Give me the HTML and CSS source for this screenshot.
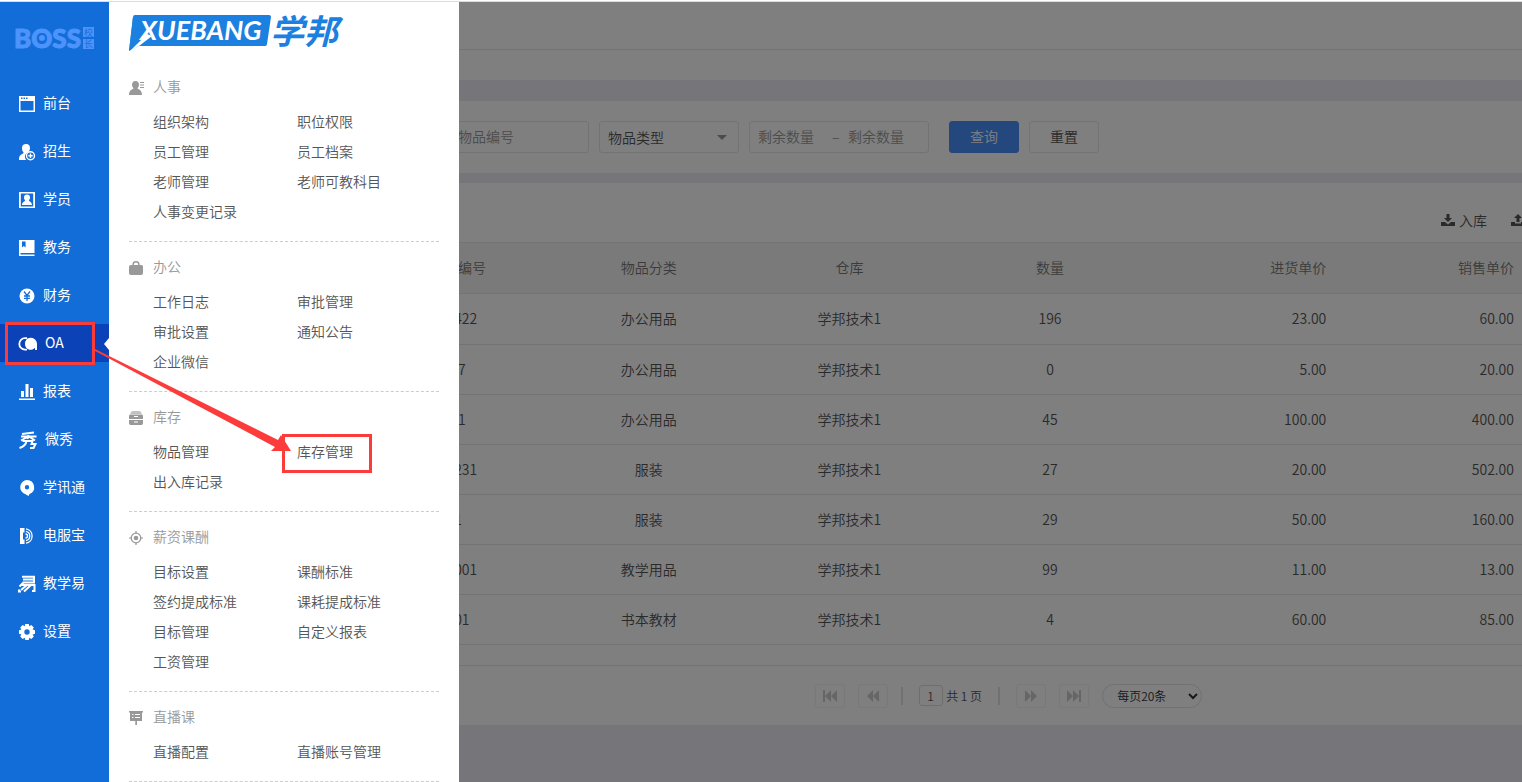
FILE: index.html
```html
<!DOCTYPE html>
<html lang="zh-CN">
<head>
    <meta charset="UTF-8">
    <meta name="viewport" content="width=device-width, initial-scale=1.0">
    <title>库存管理</title>
    <link rel="stylesheet" href="styles.css">
</head>
<body>
    <div class="app">
        <nav class="sidebar">
            <div class="boss">
                <svg width="84" height="34" viewBox="0 0 84 34">
                    <text class="boss-word" x="0" y="27">BOSS</text>
                    <circle cx="28" cy="17" r="3" fill="#4c93fb"/>
                    <rect x="69" y="6" width="11" height="10" fill="#4c93fb"/>
                    <rect x="69" y="18" width="11" height="10" fill="#4c93fb"/>
                    <text class="boss-small" x="70" y="15">校</text>
                    <text class="boss-small" x="70" y="26">长</text>
                </svg>
            </div>
            <a class="nav-item" href="#">
                <svg class="nav-icon" viewBox="0 0 18 18"><path fill-rule="evenodd" d="M1 1h16v16H1zM2.500 6v9.500h13V6zM3 2.500v1.500h1.500V2.500zM5.500 2.500v1.500H7V2.500zM8 2.500v1.500h1.500V2.500z"/></svg>
                <span>前台</span>
            </a>
            <a class="nav-item" href="#">
                <svg class="nav-icon" viewBox="0 0 18 18"><path d="M8 1c3 0 4.200 2 4 4.500-.2 1.500-1 2.500-1.500 3.500C8 10 6.500 12 7 14.500c.2 1 .6 1.800 1.200 2.500H1c0-4 .8-5 4.800-7C4.500 8.500 4 7 4 5c0-2.500 1.500-4 4-4z"/><circle cx="12.500" cy="12.700" r="4" fill="none" stroke="#fff" stroke-width="1.400"/><path d="M11.800 10.500h1.400v1.500h1.500v1.400h-1.500V15h-1.400v-1.600h-1.500V12h1.500z"/></svg>
                <span>招生</span>
            </a>
            <a class="nav-item" href="#">
                <svg class="nav-icon" viewBox="0 0 18 18"><path fill-rule="evenodd" d="M1 1h16v16H1zM2.800 2.500v13h12.400v-13z"/><path d="M9 3.500c2 0 3 1.300 3 3 0 1.400-.6 2-1.200 2.900.3 1 3.200 1.300 3.200 4.600H4c0-3.300 2.900-3.600 3.200-4.600C6.600 8.500 6 7.900 6 6.500c0-1.700 1-3 3-3z"/></svg>
                <span>学员</span>
            </a>
            <a class="nav-item" href="#">
                <svg class="nav-icon" viewBox="0 0 18 18"><path fill-rule="evenodd" d="M1 1h15.500v16H1zM4 2.500v6l1.800-1.400L7.600 8.500v-6zM2.500 14v1.500h14V14z"/></svg>
                <span>教务</span>
            </a>
            <a class="nav-item" href="#">
                <svg class="nav-icon" viewBox="0 0 18 18"><circle cx="9" cy="9" r="7.500"/><path class="cut" d="M6 4.500l3 4 3-4M9 8.500V14M6 9h6M6 11.300h6"/></svg>
                <span>财务</span>
            </a>
            <a class="nav-item active" href="#">
                <svg class="nav-icon wide" viewBox="0 0 20 18"><path d="M9 3.200H7a5.700 5.700 0 0 0 0 11.400h2" fill="none" stroke="#fff" stroke-width="1.800"/><path d="M13 2.800a6 6 0 0 1 6 6.200v6h-2v-2.200a6 6 0 1 1-4-10z"/><path d="M8 4.500c-2 2-2 7 .3 9" fill="none" stroke="#0b42b8" stroke-width="1"/></svg>
                <span>OA</span>
            </a>
            <a class="nav-item" href="#">
                <svg class="nav-icon" viewBox="0 0 18 18"><path d="M3 8h3v6H3zM7.500 1h3v13h-3zM12 5h3v9h-3zM1 15.500h16V17H1z"/></svg>
                <span>报表</span>
            </a>
            <a class="nav-item" href="#">
                <svg class="nav-icon wide" viewBox="0 0 20 18"><path class="line" d="M4 3l12-1.500M3 5.500h15.500M11 2L9.500 8M10 5.500L3 9.500M11 5.500l6 4M4.500 10h10l-1 3h4l-2 4H12M8.500 10c-.5 3-2.500 5.500-7 7"/></svg>
                <span>微秀</span>
            </a>
            <a class="nav-item" href="#">
                <svg class="nav-icon" viewBox="0 0 18 18"><path fill-rule="evenodd" d="M9 1a7.300 7.300 0 0 1 2.500 14.100L10.500 17 7.500 15.300A7.300 7.300 0 0 1 9 1zm0 5a2.200 2.200 0 1 0 0 4.400A2.200 2.200 0 0 0 9 6z"/></svg>
                <span>学讯通</span>
            </a>
            <a class="nav-item" href="#">
                <svg class="nav-icon" viewBox="0 0 18 18"><path d="M2 1h4.500v4.500H5v7h1.500V17H2z"/><path d="M8 1.800a7.300 7.300 0 0 1 0 14.400M8 4.400a4.700 4.700 0 0 1 0 9.200M7.500 7a2 2 0 0 1 0 4" fill="none" stroke="#fff" stroke-width="1.300"/></svg>
                <span>电服宝</span>
            </a>
            <a class="nav-item" href="#">
                <svg class="nav-icon" viewBox="0 0 18 18"><path class="line" d="M4 1.800h12v5.700H4.500M5 4.600h11M5.500 7.500L1.500 11.500M4 10h12.500v6H14M9 10l-6 5M13 10l-7 6.500M1 14.500v2h2"/></svg>
                <span>教学易</span>
            </a>
            <a class="nav-item" href="#">
                <svg class="nav-icon" viewBox="0 0 18 18"><path fill-rule="evenodd" d="M7.200 1h3.600l.5 2.300 2-1.200 2.500 2.500-1.200 2 2.400.6v3.600l-2.400.6 1.200 2-2.500 2.500-2-1.200-.5 2.300H7.200l-.5-2.300-2 1.200-2.500-2.500 1.200-2L1 10.800V7.200l2.400-.6-1.200-2 2.500-2.500 2 1.200zM9 6.300a2.700 2.700 0 1 0 0 5.400 2.700 2.700 0 0 0 0-5.400z"/></svg>
                <span>设置</span>
            </a>
        </nav>

        <main class="main">
            <div class="topbar"></div>
            <div class="tabs"></div>

            <form class="filters">
                <input class="field" type="text" placeholder="物品编号" aria-label="物品编号">
                <div class="select-box">
                    <select class="field" aria-label="物品类型">
                        <option>物品类型</option>
                    </select>
                </div>
                <div class="range">
                    <input type="text" placeholder="剩余数量" aria-label="最小剩余数量">
                    <span>–</span>
                    <input type="text" placeholder="剩余数量" aria-label="最大剩余数量">
                </div>
                <button class="btn primary" type="button">查询</button>
                <button class="btn" type="reset">重置</button>
            </form>

            <section class="stock">
                <div class="toolbar">
                    <a href="#">
                        <svg width="14" height="14" viewBox="0 0 14 14"><path d="M5.500 1h3v4H11L7 9 3 5h2.500zM0 9h4l3 2.500L10 9h4v4H0z"/></svg>
                        <span>入库</span>
                    </a>
                    <a class="stock-out" href="#" aria-label="出库">
                        <svg width="14" height="14" viewBox="0 0 14 14"><path d="M5.500 9h3V5H11L7 1 3 5h2.500zM0 9h4v1.500h6V9h4v4H0z"/></svg>
                    </a>
                </div>
                <table>
                    <colgroup>
                        <col class="col-name">
                        <col class="col-code">
                        <col class="col-mid">
                        <col class="col-mid">
                        <col class="col-mid">
                        <col class="col-price">
                        <col>
                    </colgroup>
                    <thead>
                        <tr><th></th><th>物品编号</th><th>物品分类</th><th>仓库</th><th>数量</th><th class="num">进货单价</th><th class="num">销售单价</th></tr>
                    </thead>
                    <tbody>
                        <tr><td></td><td>20422</td><td>办公用品</td><td>学邦技术1</td><td>196</td><td class="num">23.00</td><td class="num">60.00</td></tr>
                        <tr><td></td><td>07</td><td>办公用品</td><td>学邦技术1</td><td>0</td><td class="num">5.00</td><td class="num">20.00</td></tr>
                        <tr><td></td><td>01</td><td>办公用品</td><td>学邦技术1</td><td>45</td><td class="num">100.00</td><td class="num">400.00</td></tr>
                        <tr><td></td><td>20231</td><td>服装</td><td>学邦技术1</td><td>27</td><td class="num">20.00</td><td class="num">502.00</td></tr>
                        <tr><td></td><td>1</td><td>服装</td><td>学邦技术1</td><td>29</td><td class="num">50.00</td><td class="num">160.00</td></tr>
                        <tr><td></td><td>20001</td><td>教学用品</td><td>学邦技术1</td><td>99</td><td class="num">11.00</td><td class="num">13.00</td></tr>
                        <tr><td></td><td>001</td><td>书本教材</td><td>学邦技术1</td><td>4</td><td class="num">60.00</td><td class="num">85.00</td></tr>
                    </tbody>
                </table>
                <div class="pager">
                    <button type="button" aria-label="首页"><svg width="16" height="14" viewBox="0 0 16 14"><path d="M1 1h2v12H1zM9 1v12L3 7zM15 1v12L9 7z"/></svg></button>
                    <button type="button" aria-label="上一页"><svg width="16" height="14" viewBox="0 0 16 14"><path d="M8 1v12L2 7zM14 1v12L8 7z"/></svg></button>
                    <i class="sep"></i>
                    <label><input type="text" value="1"> 共 1 页</label>
                    <i class="sep"></i>
                    <button type="button" aria-label="下一页"><svg width="16" height="14" viewBox="0 0 16 14"><path d="M2 1v12l6-6zM8 1v12l6-6z"/></svg></button>
                    <button type="button" aria-label="末页"><svg width="16" height="14" viewBox="0 0 16 14"><path d="M1 1v12l6-6zM7 1v12l6-6zM13 1h2v12h-2z"/></svg></button>
                    <select aria-label="每页条数">
                        <option>每页20条</option>
                    </select>
                </div>
            </section>
            <div class="mask"></div>
        </main>

        <!-- OA 二级菜单 -->
        <aside class="menu">
            <div class="logo">
                <svg width="220" height="50" viewBox="0 0 220 50">
                    <path fill="#1b80e0" d="M6 8h134q2 0 2 2l-4 27q0 2-2 2H10L0 44 4 10q0-2 2-2z"/>
                    <path fill="#fff" d="M18 27l5 2-13 10-9 5z"/>
                    <path fill="#1b80e0" d="M4 10l15 16L0 44z"/>
                    <text class="logo-en" x="11" y="33">XUEBANG</text>
                    <text class="logo-cn" x="141" y="37">学邦</text>
                </svg>
            </div>

            <section class="group">
                <h2>
                    <svg viewBox="0 0 16 16"><path d="M6.500 1C9 1 10 2.700 10 5c0 1.500-.8 2.400-1.500 3.300C9 9.500 13 9.500 13 15H0c0-5.500 4-5.500 4.500-6.700C3.800 7.400 3 6.500 3 5c0-2.300 1-4 3.500-4zM11 2h4v1h-4zM11 4.500h4v1h-4zM11 7h4v1h-4z"/></svg>
                    人事
                </h2>
                <div class="links">
                    <a href="#">组织架构</a><a href="#">职位权限</a>
                    <a href="#">员工管理</a><a href="#">员工档案</a>
                    <a href="#">老师管理</a><a href="#">老师可教科目</a>
                    <a href="#">人事变更记录</a>
                </div>
            </section>
            <section class="group">
                <h2>
                    <svg viewBox="0 0 16 16"><path d="M2 5h10.500Q14 5 14 6.500V13q0 2-2 2H2q-2 0-2-2V6.500Q0 5 2 5z"/><path d="M4 5.500C4 .6 10 .6 10 5.500" fill="none" stroke="#999" stroke-width="1.500"/></svg>
                    办公
                </h2>
                <div class="links">
                    <a href="#">工作日志</a><a href="#">审批管理</a>
                    <a href="#">审批设置</a><a href="#">通知公告</a>
                    <a href="#">企业微信</a>
                </div>
            </section>
            <section class="group">
                <h2>
                    <svg viewBox="0 0 16 16"><path opacity=".6" d="M3 1h8l2 3H1z"/><path fill-rule="evenodd" d="M1 4.500h12l1 1V9H0V5.500zM5 6v1h4V6zM0 10h14v3.500L13 15H1l-1-1.500zM5 11.500v1h4v-1z"/></svg>
                    库存
                </h2>
                <div class="links">
                    <a href="#">物品管理</a><a href="#">库存管理</a>
                    <a href="#">出入库记录</a>
                </div>
            </section>
            <section class="group">
                <h2>
                    <svg viewBox="0 0 16 16"><circle cx="7" cy="8" r="4.800" fill="none" stroke="#999" stroke-width="1.300"/><circle cx="7" cy="8" r="2.300"/><path d="M6.400 1h1.200v2.500H6.400zM6.400 12.500h1.200V15H6.400zM0 7.400h2.500v1.200H0zM11.500 7.400H14v1.200h-2.500z"/></svg>
                    薪资课酬
                </h2>
                <div class="links">
                    <a href="#">目标设置</a><a href="#">课酬标准</a>
                    <a href="#">签约提成标准</a><a href="#">课耗提成标准</a>
                    <a href="#">目标管理</a><a href="#">自定义报表</a>
                    <a href="#">工资管理</a>
                </div>
            </section>
            <section class="group">
                <h2>
                    <svg viewBox="0 0 16 16"><path fill-rule="evenodd" d="M0 1h14v1.500h-1V11H8v4H6.300v-4H1V2.500H0zM3 4v1h1.500V4zM6 4v1h5V4zM3 7v1h1.500V7zM6 7v1h5V7z"/></svg>
                    直播课
                </h2>
                <div class="links">
                    <a href="#">直播配置</a><a href="#">直播账号管理</a>
                </div>
            </section>
        </aside>

        <!-- 操作指引：OA -> 库存管理 -->
        <svg class="guide" width="380" height="480" viewBox="0 0 380 480">
            <rect x="6.500" y="321.500" width="87" height="40"/>
            <rect x="283.500" y="433.500" width="87" height="36"/>
            <path d="M95 347L278 438 281 433 291 449 271 449 275 445 95 349z"/>
        </svg>
    </div>
</body>
</html>
```

FILE: styles.css
```css
* {
    box-sizing: border-box;
}

body {
    margin: 0;
    font-family: "Noto Sans CJK SC", "Noto Sans", sans-serif;
    font-size: 14px;
    font-weight: 350;
    color: #555;
    overflow: hidden;
}

a {
    color: inherit;
    text-decoration: none;
}

input, select, button {
    font-family: inherit;
    font-size: 14px;
    font-weight: inherit;
    margin: 0;
}

.app {
    position: relative;
    display: flex;
    min-height: 100vh;
    padding-top: 2px;
    background: linear-gradient(#fff 1px, #d9dddb 1px, #d9dddb 2px, #fff 2px);
}

/* 左侧导航 */
.sidebar {
    flex: 0 0 109px;
    display: flex;
    flex-direction: column;
    gap: 10px;
    background: #126dd8;
    color: #fff;
}

.boss {
    height: 72px;
    padding: 19px 0 0 14px;
}

.boss-word {
    font: 900 26px Lato, sans-serif;
    fill: #4c93fb;
    stroke: #4c93fb;
    stroke-width: 1px;
}

.boss-small {
    font-size: 9px;
    fill: #126dd8;
}

.nav-item {
    position: relative;
    display: flex;
    align-items: center;
    gap: 7px;
    height: 38px;
    padding: 0 0 2px 18px;
    font-weight: 400;
}

.nav-icon {
    width: 18px;
    height: 18px;
    margin-top: 4px;
    fill: #fff;
}

.nav-icon.wide {
    width: 20px;
}

.nav-icon .cut {
    fill: none;
    stroke: #126dd8;
    stroke-width: 1.300px;
}

.nav-icon .line {
    fill: none;
    stroke: #fff;
    stroke-width: 2px;
}

.nav-item.active {
    background: #0b42b8;
}

.nav-item.active::after {
    content: "";
    position: absolute;
    right: 0;
    top: 14px;
    border: 6px solid transparent;
    border-right: 5px solid #fff;
    border-left: 0;
}

/* 主内容 */
.main {
    position: relative;
    flex: 1;
    min-width: 0;
    overflow: hidden;
    background: #edebf5;
}

.mask {
    position: absolute;
    inset: 0;
    background: rgba(0, 0, 0, 0.5);
}

.topbar {
    height: 48px;
    background: #fff;
    border-bottom: 1px solid #e6e6e6;
}

.tabs {
    height: 30px;
    background: #fff;
}

.filters {
    display: flex;
    gap: 10px;
    margin-top: 21px;
    padding: 20px 20px 20px 340px;
    background: #fff;
}

.field, .range, .btn {
    height: 32px;
    border: 1px solid #e6e6e6;
    border-radius: 3px;
    background: #fff;
}

.field {
    width: 140px;
    padding: 0 8px 2px;
}

::placeholder {
    color: #999;
}

.select-box {
    position: relative;
}

.select-box::after {
    content: "";
    position: absolute;
    right: 12px;
    top: 14px;
    border: 5px solid transparent;
    border-top-color: #999;
    border-bottom: 0;
}

.select-box select {
    appearance: none;
    padding-bottom: 0;
    color: #555;
}

.range {
    display: flex;
    align-items: center;
    width: 180px;
    padding: 0 0 2px 8px;
}

.range input {
    width: 70px;
    padding: 0;
    border: 0;
    background: none;
}

.range span {
    width: 20px;
    padding-left: 4px;
    color: #999;
}

.btn {
    width: 70px;
    padding: 0 0 2px;
    color: #555;
}

.btn.primary {
    margin-left: 10px;
    border-color: #488ffa;
    background: #488ffa;
    color: #fff;
}

.stock {
    margin-top: 10px;
    background: #fff;
}

.toolbar {
    display: flex;
    justify-content: flex-end;
    align-items: center;
    gap: 24px;
    height: 59px;
    padding-top: 14px;
}

.toolbar a {
    display: flex;
    align-items: center;
    gap: 4px;
}

.toolbar svg {
    fill: #555;
}

.stock-out {
    margin-right: -3px;
}

table {
    width: 100%;
    table-layout: fixed;
    border-collapse: collapse;
    border-top: 1px solid #e6e6e6;
}

.col-name { width: 18.300%; }
.col-code { width: 12.800%; }
.col-mid { width: 14.200%; }
.col-price { width: 13.300%; }

th, td {
    height: 50px;
    padding: 0 0 2px;
    text-align: center;
    border-bottom: 1px solid #e6e6e6;
}

th, tbody tr:first-child td {
    height: 51px;
}

th {
    font-weight: inherit;
    color: #777;
    background: #f5f5f5;
}

.num {
    padding-right: 12px;
    text-align: right;
}

.num:last-child {
    padding-right: 8px;
}

/* 分页 */
.pager {
    display: flex;
    align-items: center;
    height: 60px;
    margin-top: 20px;
    padding-left: calc(50% - 1px);
    border-top: 1px solid #e6e6e6;
    font-size: 12px;
}

.pager button {
    display: flex;
    align-items: center;
    justify-content: center;
    width: 30px;
    height: 24px;
    margin-right: 13px;
    padding: 0;
    border: 1px solid #f3f3f3;
    border-radius: 3px;
    background: none;
}

.pager button svg {
    fill: #ccc;
}

.sep {
    width: 2px;
    height: 18px;
    margin-right: 16px;
    background: #e2e2e2;
}

.pager label {
    margin-right: 16px;
    word-spacing: normal;
}

.pager input {
    width: 24px;
    height: 21px;
    margin-right: 1px;
    padding: 0;
    border: 1px solid #ddd;
    border-radius: 3px;
    background: none;
    color: #555;
    font-size: 12px;
    text-align: center;
}

.pager select {
    width: 100px;
    height: 24px;
    padding-left: 10px;
    border: 1px solid #e2e2e2;
    border-radius: 12px;
    background: #fff;
    color: #333;
    font-size: 12px;
}

/* 二级菜单 */
.menu {
    position: absolute;
    top: 2px;
    bottom: 0;
    left: 109px;
    width: 350px;
    padding: 0 20px;
    background: #fff;
    overflow: hidden;
}

.logo {
    height: 60px;
    padding-top: 5px;
}

.logo-en {
    font: italic 700 27px Lato, sans-serif;
    fill: #fff;
}

.logo-cn {
    font-size: 34px;
    font-style: italic;
    font-weight: 700;
    fill: #1b80e0;
}

.group {
    padding: 11px 0 15px;
    border-bottom: 1px dashed #ccc;
}

.group h2 {
    display: flex;
    align-items: center;
    gap: 8px;
    height: 28px;
    margin: 0 0 5px;
    padding-bottom: 2px;
    font-size: 14px;
    font-weight: inherit;
    color: #999;
}

.group h2 svg {
    width: 16px;
    height: 16px;
    margin-top: 4px;
    fill: #999;
}

.links {
    display: grid;
    grid-template-columns: 144px 144px;
    padding-left: 24px;
    line-height: 30px;
}

/* 指引标注 */
.guide {
    position: absolute;
    top: 2px;
    left: 0;
    fill: #fc3b3b;
    pointer-events: none;
}

.guide rect {
    fill: none;
    stroke: #fc3b3b;
    stroke-width: 3px;
}
```
